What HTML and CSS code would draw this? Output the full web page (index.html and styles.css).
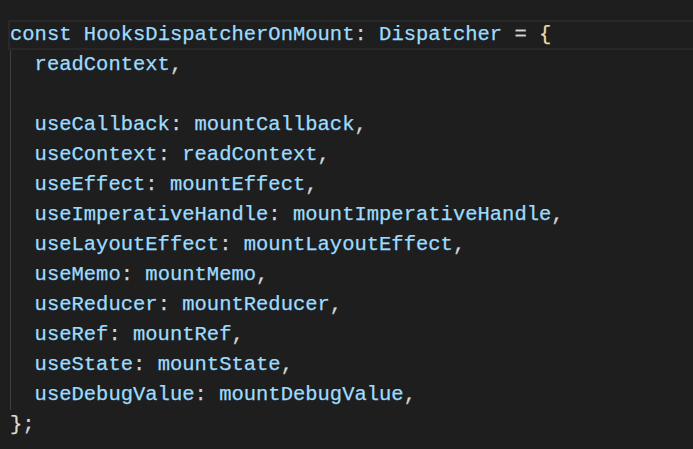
FILE: index.html
```html
<!DOCTYPE html>
<html>
<head>
<meta charset="utf-8">
<link rel="stylesheet" href="styles.css">
</head>
<body>
<div class="editor">
  <div class="line current"><span class="kw">const</span> <span class="id">HooksDispatcherOnMount</span><span class="p">: </span><span class="id">Dispatcher</span><span class="p"> = </span><span class="br">{</span></div>
  <div class="block">
    <div class="line"><span class="id">readContext</span><span class="p">,</span></div>
    <div class="line"> </div>
    <div class="line"><span class="id">useCallback</span><span class="p">: </span><span class="id">mountCallback</span><span class="p">,</span></div>
    <div class="line"><span class="id">useContext</span><span class="p">: </span><span class="id">readContext</span><span class="p">,</span></div>
    <div class="line"><span class="id">useEffect</span><span class="p">: </span><span class="id">mountEffect</span><span class="p">,</span></div>
    <div class="line"><span class="id">useImperativeHandle</span><span class="p">: </span><span class="id">mountImperativeHandle</span><span class="p">,</span></div>
    <div class="line"><span class="id">useLayoutEffect</span><span class="p">: </span><span class="id">mountLayoutEffect</span><span class="p">,</span></div>
    <div class="line"><span class="id">useMemo</span><span class="p">: </span><span class="id">mountMemo</span><span class="p">,</span></div>
    <div class="line"><span class="id">useReducer</span><span class="p">: </span><span class="id">mountReducer</span><span class="p">,</span></div>
    <div class="line"><span class="id">useRef</span><span class="p">: </span><span class="id">mountRef</span><span class="p">,</span></div>
    <div class="line"><span class="id">useState</span><span class="p">: </span><span class="id">mountState</span><span class="p">,</span></div>
    <div class="line"><span class="id">useDebugValue</span><span class="p">: </span><span class="id">mountDebugValue</span><span class="p">,</span></div>
  </div>
  <div class="line"><span class="br2">}</span><span class="p">;</span></div>
</div>
</body>
</html>
```
FILE: styles.css
```css
html, body {
  margin: 0;
  padding: 0;
  background: #1e1e1e;
  width: 693px;
  height: 449px;
  overflow: hidden;
}
.editor {
  padding-top: 20px;
  padding-left: 10px;
  font-family: "Liberation Mono", "DejaVu Sans Mono", monospace;
  font-size: 20.5px;
  color: #9cdcfe;
  -webkit-text-stroke: 0.25px currentColor;
}
.line {
  height: 30px;
  line-height: 30px;
  white-space: pre;
}
.current {
  box-sizing: border-box;
  margin-left: -2px;
  border: 2px solid #282828;
  border-right: none;
  height: 30px;
  line-height: 26px;
}
.block {
  border-left: 1px solid #404040;
  padding-left: calc(2ch - 1px);
}
.kw { color: #9cdcfe; }
.id { color: #9cdcfe; }
.p { color: #d4d4d4; }
.br { color: #e9dba6; }
.br2 { color: #e0dccb; }
```
